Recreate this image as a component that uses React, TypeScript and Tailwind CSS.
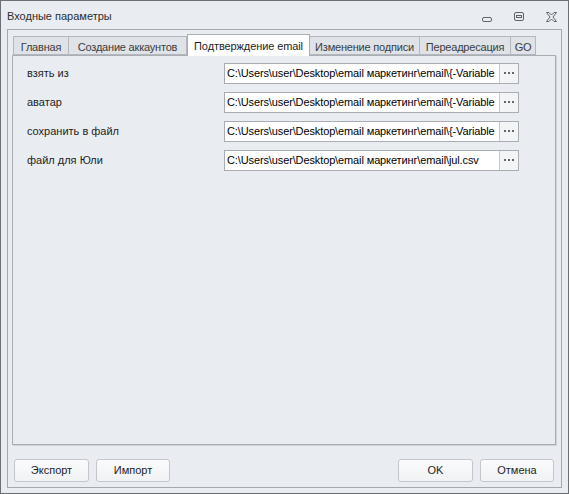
import React from "react";

const font = { fontFamily: '"Liberation Sans", Arial, sans-serif' };

function Tab({ label, active, w }: { label: string; active?: boolean; w: string }) {
  if (active) {
    return (
      <div
        className={`relative z-10 -mb-px h-[22px] shrink-0 self-end whitespace-nowrap border border-b-0 border-[#a9aeb4] bg-white pt-[3px] text-center text-[11px] tracking-[-0.1px] text-[#1e1e1e] ${w}`}
      >
        {label}
      </div>
    );
  }
  return (
    <div
      className={`-ml-px h-[19px] shrink-0 self-end whitespace-nowrap border border-[#b4b8be] bg-[#dfe2e6] pt-[2px] text-center text-[11px] tracking-[-0.2px] text-[#3a3d42] first:ml-0 ${w}`}
    >
      {label}
    </div>
  );
}

function Row({ label, value }: { label: string; value: string }) {
  return (
    <div className="flex h-[20px] items-center">
      <div className="w-[211px] shrink-0 pl-[14px] text-[11px] text-[#1e1e1e]">{label}</div>
      <div className="flex h-[21px] w-[295px] shrink-0 border border-[#a9adb3] bg-white">
        <div className="flex-1 overflow-hidden whitespace-nowrap pl-[2px] pt-[2px] text-[11px] leading-[15px] tracking-[-0.12px] text-black">
          {value}
        </div>
        <div className="flex w-[19px] shrink-0 items-center justify-center gap-[2px] border-l border-[#c6c9ce] bg-[#f3f4f6]">
          <span className="h-[2px] w-[2px] bg-[#666]" />
          <span className="h-[2px] w-[2px] bg-[#666]" />
          <span className="h-[2px] w-[2px] bg-[#666]" />
        </div>
      </div>
    </div>
  );
}

function Btn({ label, w }: { label: string; w: string }) {
  return (
    <div
      className={`flex h-[23px] items-center justify-center rounded-[3px] border border-[#c3c7cc] bg-gradient-to-b from-[#fbfbfc] to-[#f0f2f4] text-[11px] text-[#1e1e1e] ${w}`}
    >
      {label}
    </div>
  );
}

export default function App() {
  const path = "C:\\Users\\user\\Desktop\\email маркетинг\\email\\{-Variable";
  return (
    <div style={font} className="h-[494px] w-[569px] overflow-hidden border border-[#6b7077] bg-[#e9ecf0]">
      <div className="flex h-[28px] items-center pl-[6px] pr-[10px]">
        <div className="flex-1 pt-[3px] text-[11px] text-[#2b2e33]">Входные параметры</div>
        <div className="flex items-center gap-[20px] pt-[4px]">
          <svg width="12" height="12" viewBox="0 0 12 12">
            <rect x="1.5" y="6.5" width="9" height="4" rx="1.5" fill="none" stroke="#5f646b" strokeWidth="1" />
          </svg>
          <svg width="12" height="12" viewBox="0 0 12 12">
            <rect x="1.5" y="1.5" width="9" height="8" rx="1.5" fill="none" stroke="#5f646b" strokeWidth="1" />
            <rect x="3.5" y="4.5" width="5" height="2" fill="none" stroke="#5f646b" strokeWidth="1" />
          </svg>
          <svg width="13" height="12" viewBox="0 0 13 12">
            <path
              d="M1.5 1.5 L4 1.5 L6.5 4 L9 1.5 L11.5 1.5 L8 6 L11.5 10.5 L9 10.5 L6.5 8 L4 10.5 L1.5 10.5 L5 6 Z"
              fill="none"
              stroke="#5f646b"
              strokeWidth="1"
              strokeLinejoin="round"
            />
          </svg>
        </div>
      </div>
      <div className="mx-[6px] flex h-[459px] flex-col border border-[#a4a9b0] pl-[4px] pr-[5px] pt-[3px]">
        <div className="flex h-[22px] pl-[1px]">
          <Tab label="Главная" w="w-[56px]" />
          <Tab label="Создание аккаунтов" w="w-[119px]" />
          <Tab label="Подтверждение email" active w="w-[123px]" />
          <Tab label="Изменение подписи" w="w-[111px]" />
          <Tab label="Переадресация" w="w-[92px]" />
          <Tab label="GO" w="w-[26px]" />
        </div>
        <div className="flex h-[390px] flex-col gap-[9px] border border-[#a9aeb4] pt-[7px] shadow-[1px_1px_0_#d0d3d8]">
          <Row label="взять из" value={path} />
          <Row label="аватар" value={path} />
          <Row label="сохранить в файл" value={path} />
          <Row label="файл для Юли" value={"C:\\Users\\user\\Desktop\\email маркетинг\\email\\jul.csv"} />
        </div>
        <div className="mt-[14px] flex pl-[2px] pr-[2px]">
          <Btn label="Экспорт" w="w-[75px]" />
          <div className="w-[7px]" />
          <Btn label="Импорт" w="w-[74px]" />
          <div className="flex-1" />
          <Btn label="OK" w="w-[75px]" />
          <div className="w-[7px]" />
          <Btn label="Отмена" w="w-[74px]" />
        </div>
      </div>
    </div>
  );
}
